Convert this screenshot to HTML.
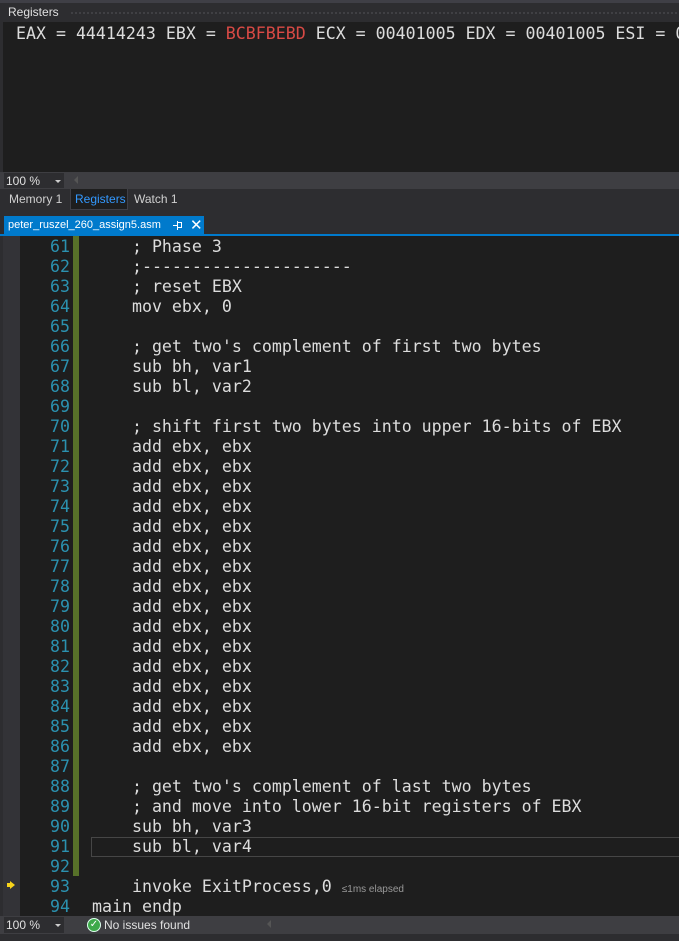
<!DOCTYPE html>
<html><head><meta charset="utf-8"><style>
*{margin:0;padding:0;box-sizing:border-box}
body{width:679px;height:941px;background:#2d2d30;overflow:hidden;position:relative;font-family:"Liberation Sans",sans-serif}
.abs{position:absolute}
.mono{font-family:"DejaVu Sans Mono","Liberation Mono",monospace;font-size:16.6px;white-space:pre;color:#dcdcdc}
.ui{font-size:12px;color:#d0d0d0}
.ln{position:absolute;left:0;width:70px;text-align:right;color:#2b91af}
.cd{position:absolute;left:92px}
</style></head><body>
<div class="abs" style="left:0;top:0;width:679px;height:3px;background:#3f3f46"></div>
<div class="abs ui" style="left:8px;top:5px;color:#e0e0e0">Registers</div>
<div class="abs" style="left:70px;top:11px;width:609px;height:4px;background-image:radial-gradient(#46464a 0.8px,transparent 1px);background-size:4px 4px"></div>
<div class="abs" style="left:3px;top:22px;width:676px;height:150px;background:#1e1e1e"></div>
<div class="abs mono" style="left:16px;top:23px;line-height:22px">EAX = 44414243 EBX = <span style="color:#d84a45">BCBFBEBD</span> ECX = 00401005 EDX = 00401005 ESI = 0</div>
<div class="abs" style="left:0;top:172px;width:679px;height:17px;background:#3e3e42"></div>
<div class="abs" style="left:4px;top:173px;width:60px;height:15px;background:#2d2d30"></div>
<div class="abs ui" style="left:6px;top:174px;color:#e0e0e0">100 %</div>
<div class="abs" style="left:55px;top:180px;border:3px solid transparent;border-top:3px solid #ccc"></div>
<div class="abs" style="left:70px;top:176px;border:4px solid transparent;border-right:4px solid #555"></div>
<div class="abs ui" style="left:9px;top:192px">Memory 1</div>
<div class="abs" style="left:70px;top:189px;width:58px;height:21px;background:#1e1e1e;border:1px solid #3f3f46;border-top:none"></div>
<div class="abs ui" style="left:75px;top:192px;color:#3399ff">Registers</div>
<div class="abs ui" style="left:134px;top:192px">Watch 1</div>
<div class="abs" style="left:0;top:234px;width:679px;height:2px;background:#007acc"></div>
<div class="abs" style="left:4px;top:216px;width:200px;height:19px;background:#007acc"></div>
<div class="abs ui" style="left:8px;top:219px;color:#fff;font-size:11px">peter_ruszel_260_assign5.asm</div>
<div class="abs" style="left:173px;top:225px;width:5px;height:1px;background:#fff"></div>
<div class="abs" style="left:177px;top:221px;width:1px;height:9px;background:#fff"></div>
<div class="abs" style="left:177px;top:222px;width:5px;height:6px;border:1px solid #fff"></div>
<div class="abs ui" style="left:190px;top:216px;color:#fff;font-size:15px">✕</div>
<div class="abs" style="left:3px;top:236px;width:676px;height:680px;background:#1e1e1e"></div>
<div class="abs" style="left:3px;top:236px;width:17px;height:680px;background:#333337"></div>
<div class="abs" style="left:73px;top:236px;width:6px;height:640px;background:#577129"></div>
<div class="abs" style="left:91px;top:837px;width:588px;height:20px;border:1px solid #464646;border-right:none"></div>
<div class="abs" style="left:10px;top:881px;width:0;height:0;border-top:4px solid transparent;border-bottom:4px solid transparent;border-left:5px solid #f7d31a"></div>
<div class="abs" style="left:7px;top:883px;width:4px;height:4px;background:#f7d31a"></div>
<div class="abs mono" style="left:0;top:237px;width:679px;height:679px;line-height:20px">
<div class="ln" style="top:0">61</div><div class="cd" style="top:0">    ; Phase 3</div>
<div class="ln" style="top:20px">62</div><div class="cd" style="top:20px">    ;---------------------</div>
<div class="ln" style="top:40px">63</div><div class="cd" style="top:40px">    ; reset EBX</div>
<div class="ln" style="top:60px">64</div><div class="cd" style="top:60px">    mov ebx, 0</div>
<div class="ln" style="top:80px">65</div>
<div class="ln" style="top:100px">66</div><div class="cd" style="top:100px">    ; get two's complement of first two bytes</div>
<div class="ln" style="top:120px">67</div><div class="cd" style="top:120px">    sub bh, var1</div>
<div class="ln" style="top:140px">68</div><div class="cd" style="top:140px">    sub bl, var2</div>
<div class="ln" style="top:160px">69</div>
<div class="ln" style="top:180px">70</div><div class="cd" style="top:180px">    ; shift first two bytes into upper 16-bits of EBX</div>
<div class="ln" style="top:200px">71</div><div class="cd" style="top:200px">    add ebx, ebx</div>
<div class="ln" style="top:220px">72</div><div class="cd" style="top:220px">    add ebx, ebx</div>
<div class="ln" style="top:240px">73</div><div class="cd" style="top:240px">    add ebx, ebx</div>
<div class="ln" style="top:260px">74</div><div class="cd" style="top:260px">    add ebx, ebx</div>
<div class="ln" style="top:280px">75</div><div class="cd" style="top:280px">    add ebx, ebx</div>
<div class="ln" style="top:300px">76</div><div class="cd" style="top:300px">    add ebx, ebx</div>
<div class="ln" style="top:320px">77</div><div class="cd" style="top:320px">    add ebx, ebx</div>
<div class="ln" style="top:340px">78</div><div class="cd" style="top:340px">    add ebx, ebx</div>
<div class="ln" style="top:360px">79</div><div class="cd" style="top:360px">    add ebx, ebx</div>
<div class="ln" style="top:380px">80</div><div class="cd" style="top:380px">    add ebx, ebx</div>
<div class="ln" style="top:400px">81</div><div class="cd" style="top:400px">    add ebx, ebx</div>
<div class="ln" style="top:420px">82</div><div class="cd" style="top:420px">    add ebx, ebx</div>
<div class="ln" style="top:440px">83</div><div class="cd" style="top:440px">    add ebx, ebx</div>
<div class="ln" style="top:460px">84</div><div class="cd" style="top:460px">    add ebx, ebx</div>
<div class="ln" style="top:480px">85</div><div class="cd" style="top:480px">    add ebx, ebx</div>
<div class="ln" style="top:500px">86</div><div class="cd" style="top:500px">    add ebx, ebx</div>
<div class="ln" style="top:520px">87</div>
<div class="ln" style="top:540px">88</div><div class="cd" style="top:540px">    ; get two's complement of last two bytes</div>
<div class="ln" style="top:560px">89</div><div class="cd" style="top:560px">    ; and move into lower 16-bit registers of EBX</div>
<div class="ln" style="top:580px">90</div><div class="cd" style="top:580px">    sub bh, var3</div>
<div class="ln" style="top:600px">91</div><div class="cd" style="top:600px">    sub bl, var4</div>
<div class="ln" style="top:620px">92</div>
<div class="ln" style="top:640px">93</div><div class="cd" style="top:640px">    invoke ExitProcess,0 <span style="font-family:'Liberation Sans',sans-serif;font-size:10px;color:#999">≤1ms elapsed</span></div>
<div class="ln" style="top:660px">94</div><div class="cd" style="top:660px">main endp</div>
</div>
<div class="abs" style="left:0;top:916px;width:679px;height:18px;background:#3e3e42"></div>
<div class="abs" style="left:4px;top:917px;width:60px;height:16px;background:#2d2d30"></div>
<div class="abs ui" style="left:6px;top:918px;color:#e0e0e0">100 %</div>
<div class="abs" style="left:55px;top:924px;border:3px solid transparent;border-top:3px solid #ccc"></div>
<div class="abs" style="left:87px;top:918px;width:14px;height:14px;border-radius:50%;background:#3ea94a;border:1px solid #dfe;color:#fff;font-size:10px;line-height:12px;text-align:center">✓</div>
<div class="abs ui" style="left:104px;top:918px;color:#e0e0e0">No issues found</div>
<div class="abs" style="left:263px;top:920px;border:4px solid transparent;border-right:4px solid #555"></div>
</body></html>
